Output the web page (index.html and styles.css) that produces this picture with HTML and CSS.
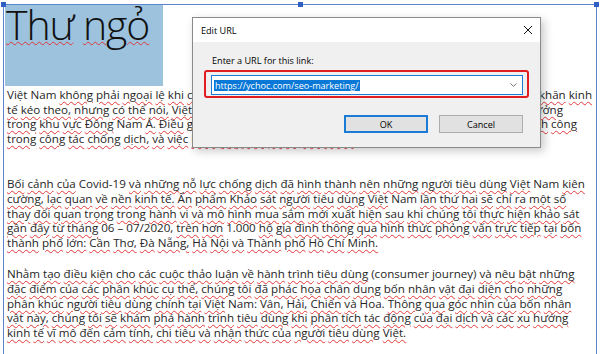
FILE: index.html
```html
<!DOCTYPE html>
<html lang="vi">
<head>
<meta charset="utf-8">
<title>Edit URL</title>
<link rel="stylesheet" href="styles.css">
</head>
<body>
<div class="frame">
  <span class="handle h-l"></span>
  <span class="handle h-m"></span>
  <span class="handle h-r"></span>

  <h1 class="title"><u>Thư</u> <u>ngỏ</u></h1>

  <div class="para p1">
    <div class="ln split ln-1"><span>Việt Nam <u>không</u> <u>phải</u> <u>ngoại</u> <u>lệ</u> <u>khi</u> <u>chịu</u> <u>ảnh</u> <u>hưởng</u> <u>nặng</u> <u>nề</u> <u>của</u> <u>đại</u> <u>dịch</u> Covid-19 <u>và</u> <u>những</u> <u>khó</u></span><span><u>khăn</u> <u>kinh</u></span></div>
    <div class="ln split ln-2"><span><u>tế</u> <u>kéo</u> <u>theo,</u> <u>nhưng</u> <u>có</u> <u>thể</u> <u>nói,</u> <u>Việt</u> Nam <u>là</u> <u>một</u> <u>trong</u> <u>số</u> <u>ít</u> <u>quốc</u> <u>gia</u> <u>có</u> <u>nền</u> <u>kinh</u> <u>tế</u> <u>vẫn</u> <u>tăng</u></span><span><u>trưởng</u></span></div>
    <div class="ln split ln-3"><span><u>trong</u> <u>khu</u> <u>vực</u> <u>Đông</u> Nam <u>Á.</u> <u>Điều</u> <u>góp</u> <u>phần</u> <u>tạo</u> <u>nên</u> <u>sự</u> <u>khác</u> <u>biệt</u> <u>này</u> <u>đến</u> <u>từ</u> <u>sự</u></span><span><u>thành</u> <u>công</u></span></div>
    <div class="ln"><u>trong</u> <u>công</u> <u>tác</u> <u>chống</u> <u>dịch,</u> <u>và</u> <u>việc</u> <u>kiểm</u> <u>soát</u> <u>dịch</u> <u>bệnh</u> <u>hiệu</u> <u>quả.</u></div>
  </div>

  <p class="para p2"><u>Bối</u> <u>cảnh</u> <u>của</u> Covid-19 <u>và</u> <u>những</u> <u>nỗ</u> <u>lực</u> <u>chống</u> <u>dịch</u> <u>đã</u> <u>hình</u> <u>thành</u> <u>nên</u> <u>những</u> <u>người</u> <u>tiêu</u> <u>dùng</u> <u>Việt</u> Nam <u>kiên</u><br>
<u>cường,</u> <u>lạc</u> <u>quan</u> <u>về</u> <u>nền</u> <u>kinh</u> <u>tế.</u> <u>Ấn</u> <u>phẩm</u> <u>Khảo</u> <u>sát</u> <u>người</u> <u>tiêu</u> <u>dùng</u> <u>Việt</u> Nam <u>lần</u> <u>thứ</u> <u>hai</u> <u>sẽ</u> <u>chỉ</u> <u>ra</u> <u>một</u> <u>số</u><br>
<u>thay</u> <u>đổi</u> <u>quan</u> <u>trọng</u> <u>trong</u> <u>hành</u> <u>vi</u> <u>và</u> <u>mô</u> <u>hình</u> <u>mua</u> <u>sắm</u> <u>mới</u> <u>xuất</u> <u>hiện</u> <u>sau</u> <u>khi</u> <u>chúng</u> <u>tôi</u> <u>thực</u> <u>hiện</u> <u>khảo</u> <u>sát</u><br>
<u>gần</u> <u>đây</u> <u>từ</u> <u>tháng</u> 06 – 07/2020, <u>trên</u> <u>hơn</u> 1.000 <u>hộ</u> <u>gia</u> <u>đình</u> <u>thông</u> <u>qua</u> <u>hình</u> <u>thức</u> <u>phỏng</u> <u>vấn</u> <u>trực</u> <u>tiếp</u> <u>tại</u> <u>bốn</u><br>
<u>thành</u> <u>phố</u> <u>lớn:</u> <u>Cần</u> <u>Thơ,</u> <u>Đà</u> <u>Nẵng,</u> <u>Hà</u> <u>Nội</u> <u>và</u> <u>Thành</u> <u>phố</u> <u>Hồ</u> <u>Chí</u> <u>Minh.</u></p>

  <p class="para p3"><u>Nhằm</u> <u>tạo</u> <u>điều</u> <u>kiện</u> <u>cho</u> <u>các</u> <u>cuộc</u> <u>thảo</u> <u>luận</u> <u>về</u> <u>hành</u> <u>trình</u> <u>tiêu</u> <u>dùng</u> (consumer journey) <u>và</u> <u>nêu</u> <u>bật</u> <u>những</u><br>
<u>đặc</u> <u>điểm</u> <u>của</u> <u>các</u> <u>phân</u> <u>khúc</u> <u>cụ</u> <u>thể,</u> <u>chúng</u> <u>tôi</u> <u>đã</u> <u>phác</u> <u>họa</u> <u>chân</u> <u>dung</u> <u>bốn</u> <u>nhân</u> <u>vật</u> <u>đại</u> <u>diện</u> <u>cho</u> <u>những</u><br>
<u>phân</u> <u>khúc</u> <u>người</u> <u>tiêu</u> <u>dùng</u> <u>chính</u> <u>tại</u> <u>Việt</u> Nam: <u>Vân,</u> <u>Hải,</u> <u>Chiến</u> <u>và</u> Hoa. <u>Thông</u> <u>qua</u> <u>góc</u> <u>nhìn</u> <u>của</u> <u>bốn</u> <u>nhân</u><br>
<u>vật</u> <u>này,</u> <u>chúng</u> <u>tôi</u> <u>sẽ</u> <u>khám</u> <u>phá</u> <u>hành</u> <u>trình</u> <u>tiêu</u> <u>dùng</u> <u>khi</u> <u>phân</u> <u>tích</u> <u>tác</u> <u>động</u> <u>của</u> <u>đại</u> <u>dịch</u> <u>và</u> <u>các</u> <u>xu</u> <u>hướng</u><br>
<u>kinh</u> <u>tế</u> <u>vĩ</u> <u>mô</u> <u>đến</u> <u>cảm</u> <u>tính,</u> <u>chi</u> <u>tiêu</u> <u>và</u> <u>nhận</u> <u>thức</u> <u>của</u> <u>người</u> <u>tiêu</u> <u>dùng</u> <u>Việt.</u></p>
</div>

<div class="dialog" role="dialog" aria-label="Edit URL">
  <div class="dlg-title">
    <span>Edit URL</span>
    <svg class="close" width="10" height="10" viewBox="0 0 10 10"><path d="M1 1 L9 9 M9 1 L1 9" stroke="#111" stroke-width="1" fill="none"/></svg>
  </div>
  <div class="dlg-body">
    <div class="label">Enter a URL for this link:</div>
    <div class="highlight">
      <div class="input">
        <span class="sel">https://ychoc.com/seo-marketing/</span>
        <svg class="chev" width="7" height="4" viewBox="0 0 7 4"><path d="M0.5 0.5 L3.5 3.3 L6.5 0.5" stroke="#666" stroke-width="0.9" fill="none"/></svg>
      </div>
    </div>
    <div class="buttons">
      <div class="btn btn-default">OK</div>
      <div class="btn">Cancel</div>
    </div>
  </div>
</div>
</body>
</html>
```
FILE: styles.css
```css
html, body {
  margin: 0;
  height: 100%;
  overflow: hidden;
  background: #ffffff;
}

body {
  font-family: "Open Sans", "Noto Sans", sans-serif;
  color: #222222;
  position: relative;
}

.frame {
  position: relative;
  margin: 4px 0 0 3px;
  width: 594px;
  height: 350px;
  box-sizing: border-box;
  border: 1px solid #5c84cf;
  border-bottom: 0;
  padding-left: 1px;
}

.handle {
  position: absolute;
  top: -3px;
  width: 5px;
  height: 5px;
  background: #2f61c2;
}
.h-l { left: -3px; }
.h-m { left: 294px; }
.h-r { right: -3px; }

.title {
  margin: 0;
  width: 158px;
  height: 81px;
  background: #9cc2de;
  font-size: 41px;
  font-weight: 300;
  letter-spacing: -1.1px;
  line-height: 38px;
  color: #111111;
  white-space: nowrap;
  padding-left: 1px;
  box-sizing: border-box;
}

u {
  text-decoration-line: underline;
  text-decoration-style: wavy;
  text-decoration-color: #e0393b;
  text-decoration-thickness: 1px;
  text-underline-offset: 2px;
}

.title u {
  text-underline-offset: 1px;
}

.para {
  margin: 0;
  padding-left: 2px;
  font-size: 11.6px;
  line-height: 14.6px;
  white-space: nowrap;
  color: #262626;
}

.p1 { margin-top: 2px; }
.p2 { margin-top: 31px; }
.p3 { margin-top: 17px; }

/* lines of the first paragraph; the split ones end at the reference's right edge */
.ln {
  display: block;
}
.split {
  display: flex;
  justify-content: space-between;
}
.ln-1 { width: 585px; }
.ln-2 { width: 556px; }
.ln-3 { width: 570px; }

/* Dialog */
.dialog {
  position: absolute;
  left: 192px;
  top: 17px;
  width: 349px;
  height: 131px;
  box-sizing: border-box;
  border: 1px solid #8a8a8a;
  background: #f0f0f0;
  box-shadow: 3px 3px 9px rgba(0, 0, 0, 0.22);
  font-family: "Open Sans", "Noto Sans", sans-serif;
  font-size: 9.1px;
  color: #000000;
  display: flex;
  flex-direction: column;
}

.dlg-title {
  height: 24px;
  background: #ffffff;
  display: flex;
  align-items: center;
  justify-content: space-between;
  padding: 0 8px 0 8px;
}

.close {
  display: block;
  margin-right: -1px;
}

.dlg-body {
  flex: 1;
  padding: 13px 11px 0 11px;
  display: flex;
  flex-direction: column;
}

.label {
  line-height: 12px;
  padding-left: 8px;
}

.highlight {
  margin-top: 3px;
  height: 28px;
  box-sizing: border-box;
  border: 2px solid #e01e22;
  border-radius: 3px;
  padding: 3px 4px 1px 5px;
}

.input {
  height: 20px;
  box-sizing: border-box;
  border: 1px solid #1b7bd6;
  background: #ffffff;
  display: flex;
  align-items: center;
  justify-content: space-between;
  padding: 0 5px 0 2px;
}

.sel {
  background: #0a78d7;
  color: #ffffff;
  line-height: 11px;
  padding: 0 1px;
}

.chev {
  display: block;
}

.buttons {
  margin-top: 17px;
  margin-right: 6px;
  display: flex;
  justify-content: flex-end;
  gap: 11px;
}

.btn {
  width: 84px;
  height: 18px;
  box-sizing: border-box;
  border: 1px solid #adadad;
  background: #e1e1e1;
  display: flex;
  align-items: center;
  justify-content: center;
}

.btn-default {
  border-color: #1a7ad6;
  box-shadow: inset 0 0 0 1px #1a7ad6;
}
```
